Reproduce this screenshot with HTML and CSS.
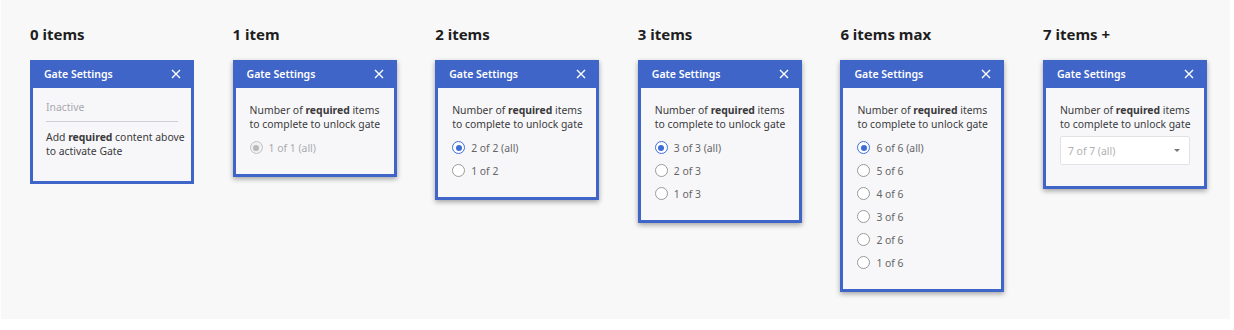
FILE: index.html
```html
<!DOCTYPE html>
<html lang="en">
<head>
    <meta charset="UTF-8">
    <title>Gate Settings states</title>
    <link rel="stylesheet" href="styles.css">
</head>
<body>
    <div class="board">
        <div class="column">
            <h2>0 items</h2>
            <div class="gate flat">
                <div class="gate-head">
                    <span>Gate Settings</span>
                    <svg class="close" width="10" height="10" viewBox="0 0 10 10"><path d="M1 1L9 9M9 1L1 9" stroke="#fff" stroke-width="1.4"/></svg>
                </div>
                <div class="gate-body empty">
                    <div class="inactive">Inactive</div>
                    <p>Add <b>required</b> content above to activate Gate</p>
                </div>
            </div>
        </div>

        <div class="column">
            <h2>1 item</h2>
            <div class="gate">
                <div class="gate-head">
                    <span>Gate Settings</span>
                    <svg class="close" width="10" height="10" viewBox="0 0 10 10"><path d="M1 1L9 9M9 1L1 9" stroke="#fff" stroke-width="1.4"/></svg>
                </div>
                <div class="gate-body">
                    <p>Number of <b>required</b> items to complete to unlock gate</p>
                    <div class="radio disabled"><span class="dot"></span>1 of 1 (all)</div>
                </div>
            </div>
        </div>

        <div class="column">
            <h2>2 items</h2>
            <div class="gate">
                <div class="gate-head">
                    <span>Gate Settings</span>
                    <svg class="close" width="10" height="10" viewBox="0 0 10 10"><path d="M1 1L9 9M9 1L1 9" stroke="#fff" stroke-width="1.4"/></svg>
                </div>
                <div class="gate-body">
                    <p>Number of <b>required</b> items to complete to unlock gate</p>
                    <div class="radio checked"><span class="dot"></span>2 of 2 (all)</div>
                    <div class="radio"><span class="dot"></span>1 of 2</div>
                </div>
            </div>
        </div>

        <div class="column">
            <h2>3 items</h2>
            <div class="gate">
                <div class="gate-head">
                    <span>Gate Settings</span>
                    <svg class="close" width="10" height="10" viewBox="0 0 10 10"><path d="M1 1L9 9M9 1L1 9" stroke="#fff" stroke-width="1.4"/></svg>
                </div>
                <div class="gate-body">
                    <p>Number of <b>required</b> items to complete to unlock gate</p>
                    <div class="radio checked"><span class="dot"></span>3 of 3 (all)</div>
                    <div class="radio"><span class="dot"></span>2 of 3</div>
                    <div class="radio"><span class="dot"></span>1 of 3</div>
                </div>
            </div>
        </div>

        <div class="column">
            <h2>6 items max</h2>
            <div class="gate">
                <div class="gate-head">
                    <span>Gate Settings</span>
                    <svg class="close" width="10" height="10" viewBox="0 0 10 10"><path d="M1 1L9 9M9 1L1 9" stroke="#fff" stroke-width="1.4"/></svg>
                </div>
                <div class="gate-body">
                    <p>Number of <b>required</b> items to complete to unlock gate</p>
                    <div class="radio checked"><span class="dot"></span>6 of 6 (all)</div>
                    <div class="radio"><span class="dot"></span>5 of 6</div>
                    <div class="radio"><span class="dot"></span>4 of 6</div>
                    <div class="radio"><span class="dot"></span>3 of 6</div>
                    <div class="radio"><span class="dot"></span>2 of 6</div>
                    <div class="radio"><span class="dot"></span>1 of 6</div>
                </div>
            </div>
        </div>

        <div class="column">
            <h2>7 items +</h2>
            <div class="gate">
                <div class="gate-head">
                    <span>Gate Settings</span>
                    <svg class="close" width="10" height="10" viewBox="0 0 10 10"><path d="M1 1L9 9M9 1L1 9" stroke="#fff" stroke-width="1.4"/></svg>
                </div>
                <div class="gate-body select-body">
                    <p>Number of <b>required</b> items to complete to unlock gate</p>
                    <div class="select">
                        <span>7 of 7 (all)</span>
                        <span class="caret"></span>
                    </div>
                </div>
            </div>
        </div>
    </div>
</body>
</html>
```

FILE: styles.css
```css
body {
    margin: 0;
    background-color: #fff;
    font-family: "Noto Sans", "Open Sans", sans-serif;
}
.board {
    width: 1200px;
    height: 295px;
    margin-left: 1px;
    padding: 24px 0 0 29px;
    background-color: #f8f8f9;
    display: flex;
    align-items: flex-start;
}
.column {
    width: 202.6px;
    flex-shrink: 0;
}
h2 {
    margin: 0 0 16px 0;
    height: 20px;
    font-size: 15px;
    line-height: 20px;
    font-weight: bold;
    color: #1e1e1e;
}
.gate {
    width: 164px;
    box-sizing: border-box;
    background-color: #4065c8;
    padding: 0 3px 3px 3px;
    box-shadow: 0 2px 5px rgba(0,0,0,0.35);
}
.gate.flat {
    box-shadow: none;
}
.gate-head {
    height: 28px;
    display: flex;
    align-items: center;
    justify-content: space-between;
    padding: 0 10px 0 11px;
    color: #fff;
    font-size: 10.5px;
    font-weight: 600;
}
.gate-body {
    background-color: #f7f7fa;
    padding: 15px 8px 15px 14px;
    font-size: 10.4px;
    line-height: 14px;
    color: #3a3a3a;
}
.gate-body p {
    margin: 0 0 5px 0;
}
.gate-body.empty {
    padding: 12px 6px 18px 13px;
}
.inactive {
    color: #a8a8ad;
    padding-bottom: 7px;
    border-bottom: 1px solid #cfd0d4;
    margin: 0 7px 8px 0;
}
.radio {
    height: 23px;
    display: flex;
    align-items: center;
    gap: 6px;
    color: #666;
}
.dot {
    width: 13px;
    height: 13px;
    box-sizing: border-box;
    border-radius: 50%;
    border: 1px solid #9a9a9a;
    background-color: #fff;
    display: flex;
    align-items: center;
    justify-content: center;
}
.radio.checked .dot {
    border: 1.5px solid #3d6ed8;
}
.radio.checked .dot::after {
    content: "";
    width: 6px;
    height: 6px;
    border-radius: 50%;
    background-color: #3d6ed8;
}
.radio.disabled {
    color: #aaa;
}
.radio.disabled .dot {
    border-color: #c2c2c2;
    background-color: #f0f0f0;
}
.radio.disabled .dot::after {
    content: "";
    width: 6px;
    height: 6px;
    border-radius: 50%;
    background-color: #b8b8b8;
}
.select-body {
    padding-bottom: 21px;
}
.select {
    margin: 3px 6px 0 0;
    height: 29px;
    box-sizing: border-box;
    background-color: #fff;
    border: 1px solid #e2e2e6;
    border-radius: 2px;
    display: flex;
    align-items: center;
    justify-content: space-between;
    padding: 0 9px 0 7px;
    color: #b0b0b0;
}
.caret {
    width: 0;
    height: 0;
    border-left: 3px solid transparent;
    border-right: 3px solid transparent;
    border-top: 3px solid #777;
}
```
